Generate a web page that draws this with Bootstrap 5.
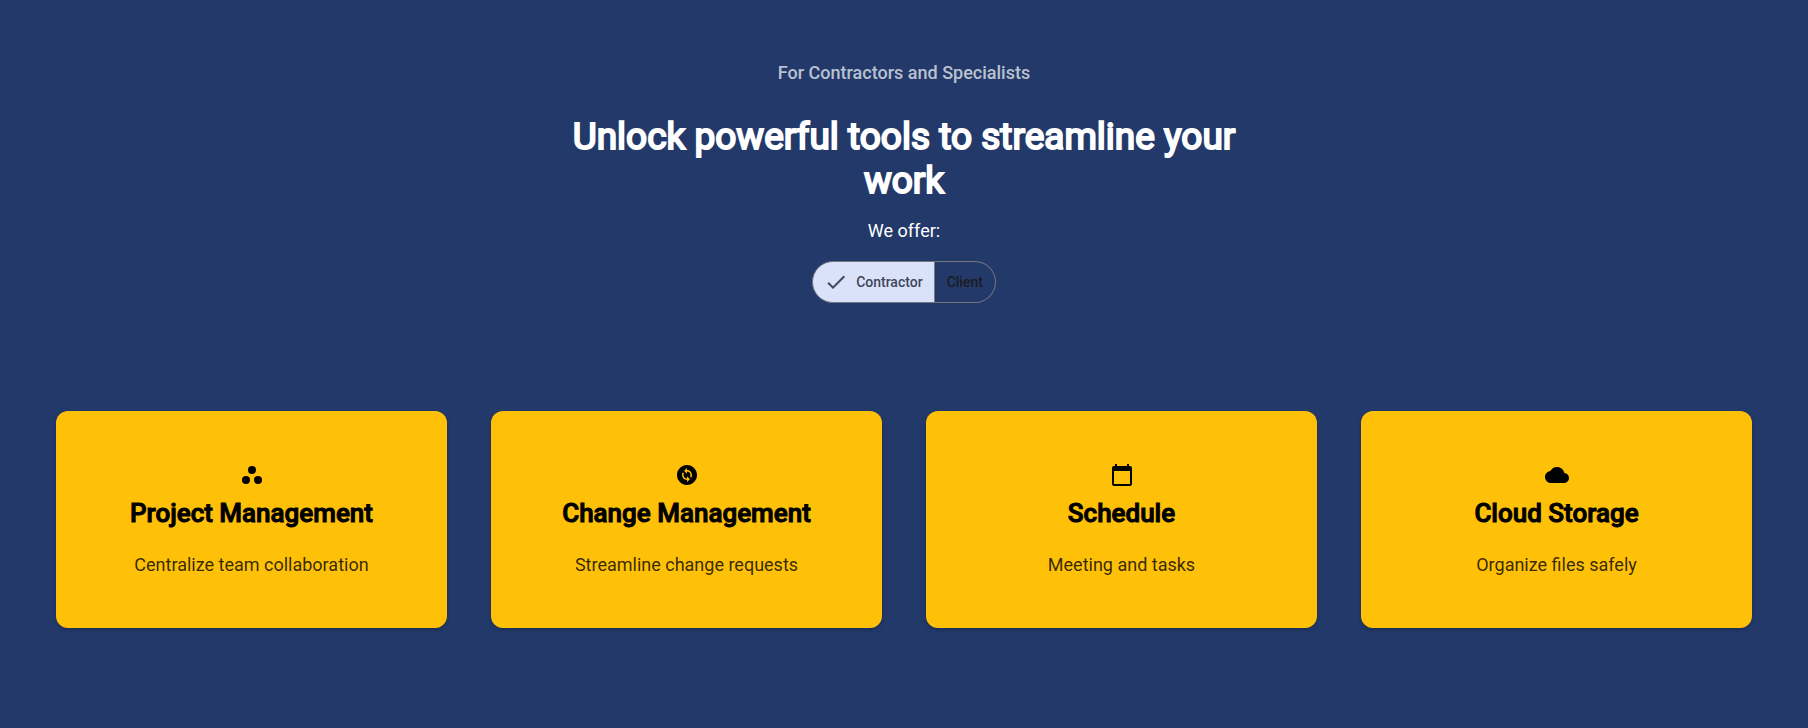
<!DOCTYPE html>
<html lang="en">
<head>
<meta charset="utf-8">
<meta name="viewport" content="width=device-width, initial-scale=1">
<title>Tools for contractors</title>
<link rel="stylesheet" href="https://cdn.jsdelivr.net/npm/bootstrap@5.3.0/dist/css/bootstrap.min.css">
<style>
body{background:#22396a;color:#fff;font-family:Roboto,sans-serif;font-size:18px;line-height:28px}
.page{padding:59px 56px 100px}
.intro{max-width:672px}
.eyebrow{color:rgba(255,255,255,.7);font-weight:500;margin-bottom:28px}
h1{font-size:37px;line-height:44px;font-weight:400;-webkit-text-stroke:2px currentColor;margin-bottom:14px}
.feature{background:#ffc107;color:#000;border-radius:12px;border:0;padding:52px 24px 49px;box-shadow:0 2px 4px rgba(0,0,0,.2)}
.feature svg{width:24px;height:24px;margin:0 auto 8px;fill:currentColor}
.feature h2{font-size:26px;line-height:36px;font-weight:500;-webkit-text-stroke:1px currentColor;margin-bottom:20px}
.feature p{color:rgba(0,0,0,.8)}
.tiles{--bs-gutter-x:44px;--bs-gutter-y:32px;margin-top:76px}
.switcher label{height:42px;font-size:14px;line-height:40px;font-weight:500;padding:0 11px;color:#1b1b1f;border:1px solid #757780;cursor:pointer}
.switcher svg{width:24px;height:24px;fill:currentColor}
.switcher label:first-of-type{border-radius:21px 0 0 21px}
.switcher label:last-of-type{border-radius:0 21px 21px 0;border-left:0;padding:0 12px}
.switcher input:checked+label{background:#dae2f9;color:#3f4759}
</style>
</head>
<body>
<main class="page">
<header class="intro mx-auto text-center">
<p class="eyebrow">For Contractors and Specialists</p>
<h1>Unlock powerful tools to streamline your work</h1>
<p class="mb-3">We offer:</p>
<div class="switcher d-inline-flex" role="radiogroup" aria-label="Audience">
<input class="btn-check" type="radio" name="audience" id="contractor" checked>
<label for="contractor" class="d-flex align-items-center"><svg viewBox="0 0 24 24" class="me-2" aria-hidden="true"><path d="M9 16.17 4.83 12l-1.42 1.41L9 19 21 7l-1.41-1.41z"/></svg>Contractor</label>
<input class="btn-check" type="radio" name="audience" id="client">
<label for="client">Client</label>
</div>
</header>
<section class="row row-cols-1 row-cols-md-2 row-cols-xl-4 tiles text-center">
<div class="col"><article class="card feature">
<svg viewBox="0 0 24 24" aria-hidden="true"><circle cx="6" cy="17" r="4"/><circle cx="12" cy="7" r="4"/><circle cx="18" cy="17" r="4"/></svg>
<h2>Project Management</h2><p class="mb-0">Centralize team collaboration</p>
</article></div>
<div class="col"><article class="card feature">
<svg viewBox="0 0 24 24" aria-hidden="true"><path d="M12 2C6.48 2 2 6.48 2 12s4.48 10 10 10 10-4.480 10-10S17.520 2 12 2zm.06 17v-2.010H12c-1.280 0-2.560-.490-3.540-1.460-1.710-1.710-1.920-4.350-.640-6.290l1.100 1.100c-.710 1.330-.530 3.010.590 4.130.7.700 1.620 1.030 2.540 1.010v-2.140l2.830 2.830L12.060 19zm4.110-4.240-1.100-1.100c.710-1.330.530-3.010-.590-4.130C13.790 8.840 12.900 8.500 12 8.500h-.060v2.150L9.110 7.830 11.940 5v2.020c1.300-.020 2.610.450 3.600 1.450 1.700 1.700 1.910 4.350.630 6.290z"/></svg>
<h2>Change Management</h2><p class="mb-0">Streamline change requests</p>
</article></div>
<div class="col"><article class="card feature">
<svg viewBox="0 0 24 24" aria-hidden="true"><path d="M20 3h-1V1h-2v2H7V1H5v2H4c-1.100 0-2 .9-2 2v16c0 1.100.9 2 2 2h16c1.100 0 2-.9 2-2V5c0-1.100-.9-2-2-2zm0 18H4V8h16z"/></svg>
<h2>Schedule</h2><p class="mb-0">Meeting and tasks</p>
</article></div>
<div class="col"><article class="card feature">
<svg viewBox="0 0 24 24" aria-hidden="true"><path d="M19.350 10.040C18.670 6.590 15.640 4 12 4 9.110 4 6.600 5.640 5.350 8.040 2.340 8.360 0 10.910 0 14c0 3.310 2.690 6 6 6h13c2.760 0 5-2.240 5-5 0-2.640-2.050-4.780-4.650-4.960z"/></svg>
<h2>Cloud Storage</h2><p class="mb-0">Organize files safely</p>
</article></div>
</section>
</main>
<script src="https://cdn.jsdelivr.net/npm/bootstrap@5.3.0/dist/js/bootstrap.bundle.min.js"></script>
</body>
</html>
